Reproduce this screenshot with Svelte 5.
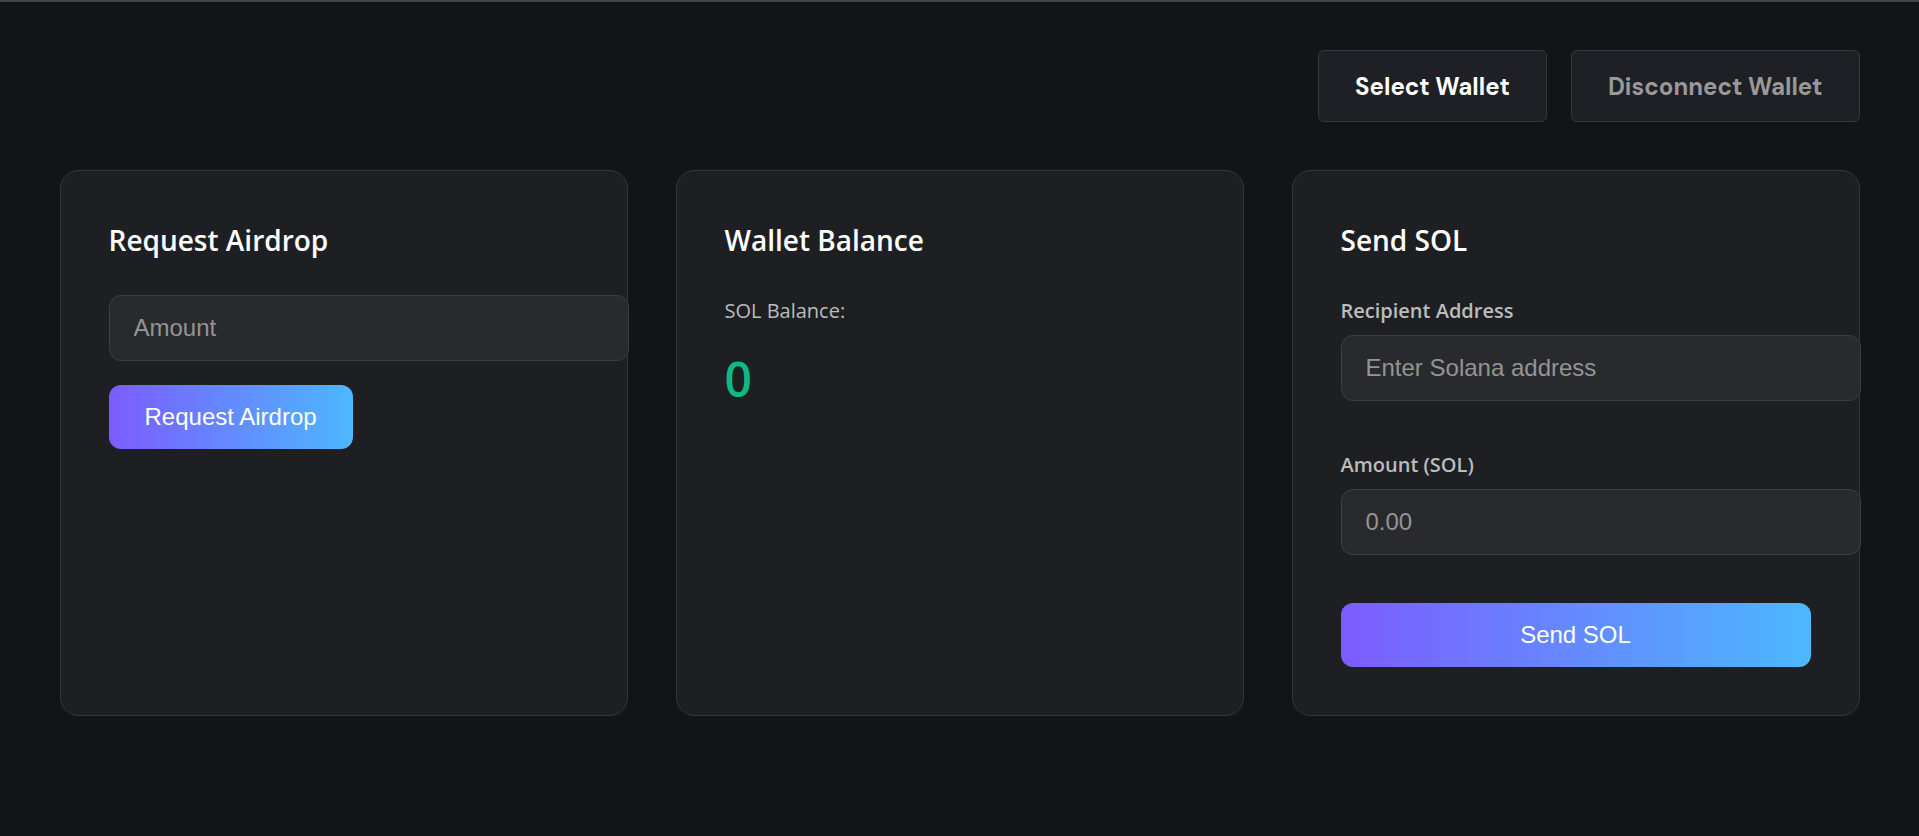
<script lang="ts">
	let airdropAmount = $state('');
	let recipient     = $state('');
	let sendAmount    = $state('');
	let balance       = $state(0);
</script>

<main class="app">
	<header class="wallet-bar">
		<button class="wallet-btn">Select Wallet</button>
		<button class="wallet-btn" disabled>Disconnect Wallet</button>
	</header>

	<div class="grid">
		<section class="card">
			<h2>Request Airdrop</h2>
			<input type="text" placeholder="Amount" aria-label="Amount" bind:value={airdropAmount} />
			<button class="action airdrop">Request Airdrop</button>
		</section>

		<section class="card">
			<h2>Wallet Balance</h2>
			<p class="caption">SOL Balance:</p>
			<p class="balance">{balance}</p>
		</section>

		<section class="card">
			<h2>Send SOL</h2>
			<div class="field">
				<label for="recipient">Recipient Address</label>
				<input id="recipient" type="text" placeholder="Enter Solana address" bind:value={recipient} />
			</div>
			<div class="field">
				<label for="amount">Amount (SOL)</label>
				<input id="amount" type="text" placeholder="0.00" bind:value={sendAmount} />
			</div>
			<button class="action wide">Send SOL</button>
		</section>
	</div>
</main>

<style>
	:global(body) {
		background: #131418;
		border-top: 2px solid #444548;
		color: #fff;
		font-family: 'Segoe UI', 'Open Sans', 'Noto Sans', sans-serif;
	}

	.app {
		max-width: 1800px;
		margin: 0 auto;
		padding: 48px 24px;
	}

	@media (min-width: 1848px) {
		.app {
			padding: 48px 0;
		}
	}

	.wallet-bar {
		display: flex;
		justify-content: flex-end;
		gap: 24px;
		margin-bottom: 48px;
	}

	.wallet-btn {
		height: 72px;
		padding: 0 36px;
		background: #1f2025;
		border: 1px solid #36373b;
		border-radius: 6px;
		color: #fff;
		cursor: pointer;
		font-family: 'DM Sans', Inter, sans-serif;
		font-size: 24px;
		font-weight: 700;
	}

	.wallet-btn:disabled {
		color: #999;
		cursor: not-allowed;
	}

	.grid {
		display: grid;
		grid-template-columns: repeat(auto-fit, minmax(400px, 1fr));
		gap: 48px;
	}

	.card {
		padding: 48px;
		background: #1e1f23;
		border: 1px solid #343539;
		border-radius: 18px;
	}

	h2 {
		margin: 0 0 34px;
		font-size: 28px;
		font-weight: 600;
		line-height: 42px;
	}

	input {
		display: block;
		box-sizing: content-box;
		width: 100%;
		height: 28px;
		padding: 18px 24px;
		background: #292a2d;
		border: 1px solid #3e3f42;
		border-radius: 12px;
		color: #fff;
		font-family: Arial, 'Liberation Sans', sans-serif;
		font-size: 24px;
	}

	input::placeholder {
		color: #949496;
		opacity: 1;
	}

	.action {
		height: 64px;
		padding: 0 36px;
		background: linear-gradient(90deg, #7c5cff, #4cb8ff);
		border: none;
		border-radius: 12px;
		color: #fff;
		cursor: pointer;
		font-family: Arial, 'Liberation Sans', sans-serif;
		font-size: 24px;
	}

	.airdrop {
		margin-top: 24px;
	}

	.wide {
		width: 100%;
	}

	.caption,
	label {
		display: block;
		margin: 0 0 8px;
		color: #bbbcbd;
		font-size: 20px;
		line-height: 32px;
	}

	label {
		font-weight: 600;
	}

	.balance {
		margin: 0;
		padding-top: 12px;
		color: #10b981;
		font-size: 48px;
		font-weight: 600;
		line-height: 64px;
	}

	.field {
		margin-bottom: 48px;
	}
</style>
